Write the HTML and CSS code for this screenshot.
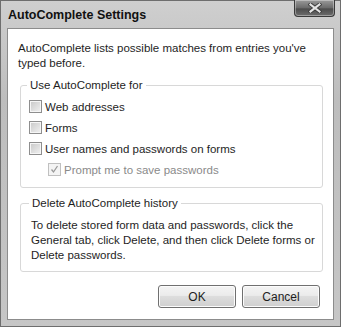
FILE: index.html
```html
<!DOCTYPE html>
<html>

<head>
    <title>AutoComplete Settings</title>
    <link rel="stylesheet" href="styles.css">
</head>

<body>
    <div class="dialog">
        <div class="titlebar">
            <span class="title">AutoComplete Settings</span>
            <button class="close" aria-label="Close">
                <svg width="14" height="10" viewBox="0 0 14 10">
                    <path d="M2.5 1.5 L11.5 8.5 M11.5 1.5 L2.5 8.5" stroke="#3c3c3c" stroke-width="4" stroke-linecap="square" />
                    <path d="M2.5 1.5 L11.5 8.5 M11.5 1.5 L2.5 8.5" stroke="#e4e4e4" stroke-width="2.2" stroke-linecap="square" />
                </svg>
            </button>
        </div>
        <div class="client">
            <p class="intro">AutoComplete lists possible matches from entries you've typed before.</p>

            <fieldset class="group">
                <legend>Use AutoComplete for</legend>
                <label class="option"><span class="box"></span>Web addresses</label>
                <label class="option"><span class="box"></span>Forms</label>
                <label class="option"><span class="box"></span>User names and passwords on forms</label>
                <label class="option sub disabled">
                    <span class="box checked">
                        <svg width="9" height="9" viewBox="0 0 9 9">
                            <path d="M1.5 4.5 L3.5 7 L7.5 1" fill="none" stroke="#9a9a9a" stroke-width="1.3" />
                        </svg>
                    </span>Prompt me to save passwords
                </label>
            </fieldset>

            <fieldset class="group history">
                <legend>Delete AutoComplete history</legend>
                <p>To delete stored form data and passwords, click the General tab, click Delete, and then click Delete forms or Delete passwords.</p>
            </fieldset>

            <div class="buttons">
                <button class="btn">OK</button>
                <button class="btn">Cancel</button>
            </div>
        </div>
    </div>
</body>

</html>
```

FILE: styles.css
```css
body {
    margin: 0;
    background: #fff;
    font-family: 'Liberation Sans', Arial, sans-serif;
    font-size: 11.5px;
    color: #1e1e1e;
}

.dialog {
    width: 341px;
    height: 327px;
    box-sizing: border-box;
    border: 1px solid #6e6e6e;
    padding: 0 6px 6px;
    background: linear-gradient(to bottom, #cfcfcf, #bdbdbd 30%, #c6c6c6);
    display: flex;
    flex-direction: column;
}

.titlebar {
    height: 27px;
    display: flex;
    justify-content: space-between;
    align-items: flex-start;
}

.title {
    font-weight: bold;
    font-size: 12.5px;
    color: #111;
    margin: 7px 0 0 1px;
}

.close {
    width: 41px;
    height: 17px;
    margin: -1px -1px 0 0;
    padding: 0;
    border: 1px solid #3a3a3a;
    border-top: none;
    border-radius: 0 0 4px 4px;
    background: linear-gradient(to bottom, #9a9a9a, #6a6a6a 50%, #4c4c4c 55%, #6c6c6c);
    box-shadow: inset 0 0 0 1px rgba(255, 255, 255, 0.35);
    display: flex;
    justify-content: center;
    align-items: center;
}

.client {
    flex: 1;
    background: #fff;
    border: 1px solid #8c8c8c;
    padding: 12px 10px 0 10px;
}

.intro {
    margin: 0;
    line-height: 15px;
}

.group {
    margin: 7px 0 0 2px;
    padding: 3px 8px 7px;
    border: 1px solid #d8d8d8;
    border-radius: 3px;
}

.group legend {
    padding: 0 3px;
    margin-left: -2px;
    line-height: 15px;
}

.option {
    height: 21px;
    display: flex;
    align-items: center;
}

.box {
    width: 11px;
    height: 11px;
    margin-right: 3px;
    border: 1px solid #8e8e8e;
    background: linear-gradient(135deg, #c8c8c8, #f2f2f2);
    box-shadow: inset 0 0 0 1px #f6f6f6;
    display: flex;
    justify-content: center;
    align-items: center;
}

.sub {
    padding-left: 19px;
}

.disabled {
    color: #8a8a8a;
}

.box.checked {
    border-color: #c0c0c0;
    background: #f4f4f4;
    box-shadow: none;
}

.history {
    margin-top: 8px;
    padding: 7px 0 8px 10px;
}

.history p {
    margin: 0;
    line-height: 15px;
}

.buttons {
    display: flex;
    justify-content: flex-end;
    gap: 6px;
    margin: 13px 3px 0 0;
}

.btn {
    width: 78px;
    height: 23px;
    border: 1px solid #707070;
    border-radius: 3px;
    background: linear-gradient(to bottom, #f4f4f4, #ebebeb 45%, #dddddd 50%, #cfcfcf);
    box-shadow: inset 0 0 0 1px #fcfcfc;
    font-family: 'Liberation Sans', Arial, sans-serif;
    font-size: 12px;
    color: #1e1e1e;
}
```
